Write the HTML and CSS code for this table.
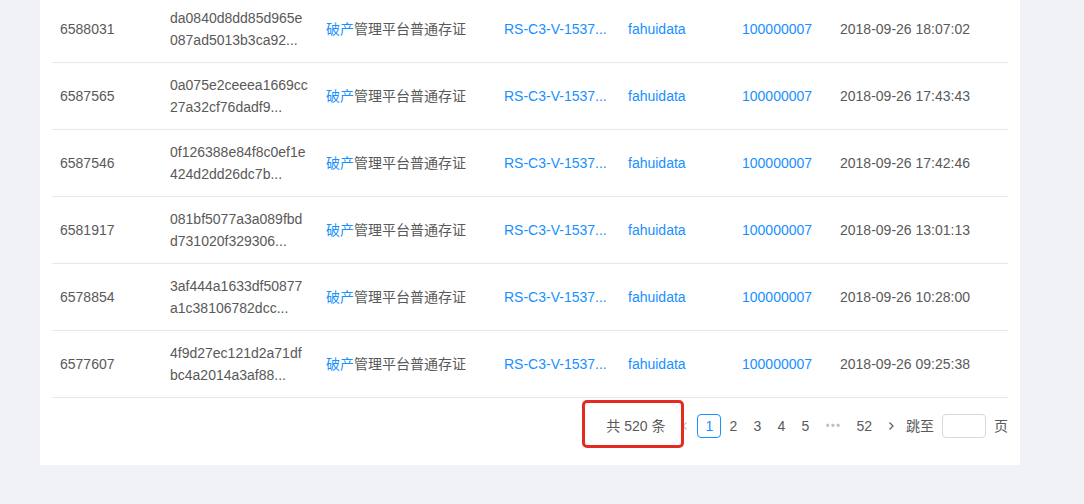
FILE: index.html
```html
<!DOCTYPE html>
<html lang="zh-CN">
<head>
<meta charset="utf-8">
<title>存证列表</title>
<link rel="stylesheet" href="styles.css">
</head>
<body>
<div class="card">
  <div class="table">
    <div class="row">
      <div class="cell">6588031</div>
      <div class="cell hash"><span>da0840d8dd85d965e</span><span>087ad5013b3ca92...</span></div>
      <div class="cell"><span class="link">破产</span>管理平台普通存证</div>
      <div class="cell link">RS-C3-V-1537...</div>
      <div class="cell link">fahuidata</div>
      <div class="cell link">100000007</div>
      <div class="cell">2018-09-26 18:07:02</div>
    </div>
    <div class="row">
      <div class="cell">6587565</div>
      <div class="cell hash"><span>0a075e2ceeea1669cc</span><span>27a32cf76dadf9...</span></div>
      <div class="cell"><span class="link">破产</span>管理平台普通存证</div>
      <div class="cell link">RS-C3-V-1537...</div>
      <div class="cell link">fahuidata</div>
      <div class="cell link">100000007</div>
      <div class="cell">2018-09-26 17:43:43</div>
    </div>
    <div class="row">
      <div class="cell">6587546</div>
      <div class="cell hash"><span>0f126388e84f8c0ef1e</span><span>424d2dd26dc7b...</span></div>
      <div class="cell"><span class="link">破产</span>管理平台普通存证</div>
      <div class="cell link">RS-C3-V-1537...</div>
      <div class="cell link">fahuidata</div>
      <div class="cell link">100000007</div>
      <div class="cell">2018-09-26 17:42:46</div>
    </div>
    <div class="row">
      <div class="cell">6581917</div>
      <div class="cell hash"><span>081bf5077a3a089fbd</span><span>d731020f329306...</span></div>
      <div class="cell"><span class="link">破产</span>管理平台普通存证</div>
      <div class="cell link">RS-C3-V-1537...</div>
      <div class="cell link">fahuidata</div>
      <div class="cell link">100000007</div>
      <div class="cell">2018-09-26 13:01:13</div>
    </div>
    <div class="row">
      <div class="cell">6578854</div>
      <div class="cell hash"><span>3af444a1633df50877</span><span>a1c38106782dcc...</span></div>
      <div class="cell"><span class="link">破产</span>管理平台普通存证</div>
      <div class="cell link">RS-C3-V-1537...</div>
      <div class="cell link">fahuidata</div>
      <div class="cell link">100000007</div>
      <div class="cell">2018-09-26 10:28:00</div>
    </div>
    <div class="row">
      <div class="cell">6577607</div>
      <div class="cell hash"><span>4f9d27ec121d2a71df</span><span>bc4a2014a3af88...</span></div>
      <div class="cell"><span class="link">破产</span>管理平台普通存证</div>
      <div class="cell link">RS-C3-V-1537...</div>
      <div class="cell link">fahuidata</div>
      <div class="cell link">100000007</div>
      <div class="cell">2018-09-26 09:25:38</div>
    </div>
  </div>
  <div class="pagination">
    <div class="total">共 520 条<span class="mark"></span></div>
    <div class="item arrow disabled"><svg width="10" height="10" viewBox="0 0 10 10"><path d="M6.5 1.5 3 5l3.5 3.5" fill="none" stroke="currentColor" stroke-width="1.2"/></svg></div>
    <div class="item active">1</div>
    <div class="item">2</div>
    <div class="item">3</div>
    <div class="item">4</div>
    <div class="item">5</div>
    <div class="item ellipsis">•••</div>
    <div class="item">52</div>
    <div class="item arrow"><svg width="10" height="10" viewBox="0 0 10 10"><path d="M3.5 1.5 7 5 3.5 8.5" fill="none" stroke="currentColor" stroke-width="1.2"/></svg></div>
    <div class="jumper">跳至<span class="input"></span>页</div>
  </div>
</div>
</body>
</html>
```
FILE: styles.css
```css
* { box-sizing: border-box; }
html, body { margin: 0; padding: 0; }
body {
  background: #f0f2f5;
  font-family: "Liberation Sans", "Noto Sans CJK SC", sans-serif;
  font-size: 14px;
  color: #595959;
  height: 504px;
  overflow: hidden;
}
.card {
  margin: -4px 0 0 40px;
  width: 980px;
  background: #fff;
  padding: 0 12px 11px;
}
.row {
  display: grid;
  grid-template-columns: 110px 156px 178px 124px 114px 98px 1fr;
  height: 67px;
  border-bottom: 1px solid #e8e8e8;
  align-items: center;
}
.cell {
  padding: 0 8px;
  line-height: 22px;
  white-space: nowrap;
}
.hash span { display: block; }
.link { color: #1890ff; }
.pagination {
  display: flex;
  justify-content: flex-end;
  align-items: center;
  margin: 16px 0;
  height: 24px;
  line-height: 24px;
}
.total {
  position: relative;
  margin-right: 8px;
}
.mark {
  position: absolute;
  left: -24px;
  right: -19px;
  top: -14px;
  bottom: -10px;
  border: 3px solid #e52b20;
  border-radius: 5px;
}
.item {
  min-width: 24px;
  height: 24px;
  padding: 0 6px;
  text-align: center;
  border: 1px solid transparent;
  border-radius: 4px;
  line-height: 22px;
  color: #595959;
}
.item.arrow {
  padding: 0;
  display: flex;
  align-items: center;
  justify-content: center;
}
.item.disabled { color: rgba(0,0,0,0.25); }
.item.active {
  border-color: #1890ff;
  color: #1890ff;
}
.item.ellipsis {
  min-width: 32px;
  color: rgba(0,0,0,0.25);
  font-size: 12px;
  letter-spacing: 1px;
}
.jumper {
  display: flex;
  align-items: center;
  margin-left: 3px;
}
.input {
  width: 44px;
  height: 24px;
  margin: 0 8px;
  border: 1px solid #d9d9d9;
  border-radius: 4px;
  background: #fff;
}
```
